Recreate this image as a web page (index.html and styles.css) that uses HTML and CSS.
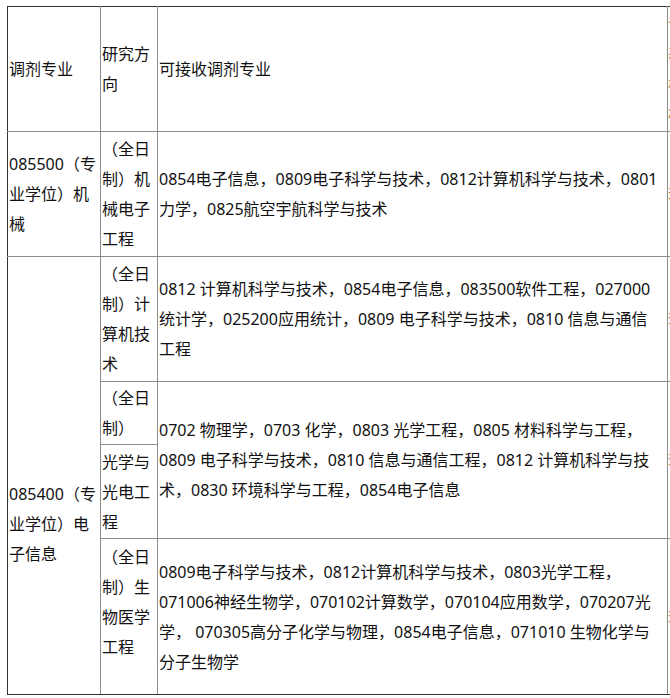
FILE: index.html
```html
<!DOCTYPE html>
<html lang="zh-CN">
<head>
<meta charset="utf-8">
<title>调剂专业</title>
<link rel="stylesheet" href="styles.css">
</head>
<body>
<div class="page">
<table class="adjust">
  <colgroup>
    <col class="w-major">
    <col class="w-dir">
    <col class="w-accept">
    <col class="w-note">
  </colgroup>
  <thead>
    <tr class="r-head">
      <th class="edge-left edge-top">调剂专业</th>
      <th class="edge-top">研究方向</th>
      <th class="edge-top accept">可接收调剂专业</th>
      <th class="edge-top note">调剂考生须满足教育部调剂基本条件，初试成绩达到我校复试基本要求，报考专业相同或相近</th>
    </tr>
  </thead>
  <tbody>
    <tr class="r-2">
      <td class="edge-left">085500（专业学位）机械</td>
      <td>（全日制）机械电子工程</td>
      <td class="accept">0854电子信息，0809电子科学与技术，0812计算机科学与技术，0801力学，0825航空宇航科学与技术</td>
      <td class="note">若干</td>
    </tr>
    <tr class="r-3">
      <td class="edge-left edge-bottom major-ei" rowspan="4">085400（专业学位）电子信息</td>
      <td>（全日制）计算机技术</td>
      <td class="accept">0812 计算机科学与技术，0854电子信息，083500软件工程，027000统计学，025200应用统计，0809 电子科学与技术，0810 信息与通信工程</td>
      <td class="note">若干</td>
    </tr>
    <tr class="r-4a">
      <td class="dir-top">（全日制）</td>
      <td class="accept" rowspan="2">0702 物理学，0703 化学，0803 光学工程，0805 材料科学与工程，0809 电子科学与技术，0810 信息与通信工程，0812 计算机科学与技术，0830 环境科学与工程，0854电子信息</td>
      <td class="note" rowspan="2">若干</td>
    </tr>
    <tr class="r-4b">
      <td>光学与光电工程</td>
    </tr>
    <tr class="r-5">
      <td class="edge-bottom dir-bio">（全日制）生物医学工程</td>
      <td class="edge-bottom accept">0809电子科学与技术，0812计算机科学与技术，0803光学工程，071006神经生物学，070102计算数学，070104应用数学，070207光学， 070305高分子化学与物理，0854电子信息，071010 生物化学与分子生物学</td>
      <td class="edge-bottom note">若干</td>
    </tr>
  </tbody>
</table>
</div>
</body>
</html>
```

FILE: styles.css
```css
html, body {
  margin: 0;
  padding: 0;
  background: #ffffff;
  overflow: hidden;
}

.page {
  padding: 6px 0 0 7px;
  width: 900px;
}

.adjust {
  border-collapse: collapse;
  table-layout: fixed;
  width: 860px;
  font-family: "Noto Sans", "Noto Sans CJK SC", sans-serif;
  font-size: 16px;
  line-height: 30px;
  color: #111111;
}

.w-major { width: 93px; }
.w-dir { width: 57px; }
.w-accept { width: 510px; }
.w-note { width: 200px; }

.adjust th,
.adjust td {
  border: 1px solid #8c8c8c;
  padding: 0 1px 0 1px;
  text-align: left;
  vertical-align: middle;
  font-weight: normal;
  word-break: normal;
}

.adjust .edge-top { border-top-color: #333333; }
.adjust .edge-left { border-left-color: #333333; }
.adjust .edge-bottom { border-bottom-color: #333333; }

.adjust .accept { padding-right: 5px; }

.adjust .note {
  padding-left: 0;
  color: #b08a3c;
}

.r-head { height: 125px; }
.r-2 { height: 125px; }
.r-3 { height: 125px; }
.r-4a { height: 63px; }
.r-4b { height: 94px; }
.r-5 { height: 156px; }

.adjust .major-ei { padding-top: 96px; }
.adjust .dir-bio { padding-bottom: 30px; }
```
